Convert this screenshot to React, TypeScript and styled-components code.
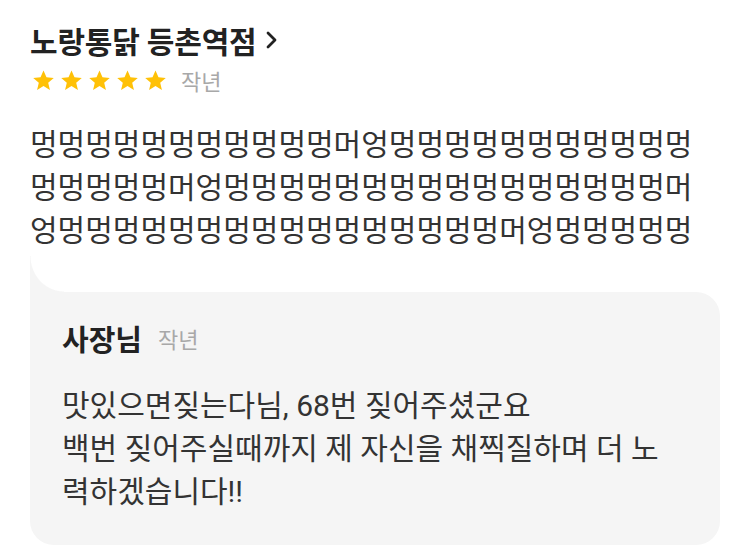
import React from 'react';
import styled, { createGlobalStyle } from 'styled-components';

const GlobalStyle = createGlobalStyle`
  body {
    margin: 0;
    background: #ffffff;
    font-family: Roboto, 'Noto Sans CJK KR', 'Noto Sans', sans-serif;
  }
`;

const Page = styled.div`
  padding: 18px 30px 0 30px;
`;

const TitleRow = styled.div`
  display: flex;
  align-items: center;
  gap: 10px;
  height: 44px;
`;

const ShopName = styled.h1`
  margin: 0;
  font-size: 30px;
  font-weight: 700;
  color: #222222;
  letter-spacing: -0.2px;
`;

const MetaRow = styled.div`
  display: flex;
  align-items: center;
  height: 36px;
`;

const Stars = styled.div`
  display: flex;
  gap: 5px;
  margin-left: 2px;
`;

const TimeAgo = styled.span<{ $gap?: number }>`
  font-size: 22px;
  color: #a8a8a8;
  margin-left: ${(p) => p.$gap ?? 14}px;
`;

const ReviewText = styled.p`
  margin: 25px 0 0 0;
  font-size: 30px;
  line-height: 43px;
  color: #333333;
  width: 690px;
`;

const Bubble = styled.div`
  position: relative;
  margin-top: 40px;
  width: 690px;
  box-sizing: border-box;
  background: #f5f5f5;
  border-radius: 0 24px 24px 24px;
  padding: 22px 32px 32px 32px;

  &::before {
    content: '';
    position: absolute;
    left: 0;
    top: -36px;
    width: 34px;
    height: 36px;
    background: radial-gradient(
      ellipse 34px 36px at 100% 0,
      transparent 97%,
      #f5f5f5 100%
    );
  }
`;

const OwnerRow = styled.div`
  display: flex;
  align-items: center;
  height: 48px;
`;

const OwnerName = styled.span`
  font-size: 29px;
  font-weight: 700;
  color: #222222;
`;

const ReplyText = styled.p`
  margin: 22px 0 0 0;
  font-size: 30px;
  line-height: 43px;
  color: #333333;
`;

const Star = () => (
  <svg width="23" height="23" viewBox="0 0 24 24">
    <path
      d="M12 1.5l3.1 7.1 7.6.7-5.8 5 1.8 7.5L12 17.8l-6.7 4 1.8-7.5-5.8-5 7.6-.7z"
      fill="#FFC107"
    />
  </svg>
);

const Chevron = () => (
  <svg width="12" height="20" viewBox="0 0 12 20">
    <polyline
      points="2,3 9,10 2,17"
      fill="none"
      stroke="#222222"
      strokeWidth="2.8"
      strokeLinecap="round"
      strokeLinejoin="round"
    />
  </svg>
);

const reviewLines = [
  '멍멍멍멍멍멍멍멍멍멍멍머엉멍멍멍멍멍멍멍멍멍멍멍',
  '멍멍멍멍멍머엉멍멍멍멍멍멍멍멍멍멍멍멍멍멍멍멍머',
  '엉멍멍멍멍멍멍멍멍멍멍멍멍멍멍멍멍머엉멍멍멍멍멍',
];

const App = () => {
  return (
    <Page>
      <GlobalStyle />
      <TitleRow>
        <ShopName>노랑통닭 등촌역점</ShopName>
        <Chevron />
      </TitleRow>
      <MetaRow>
        <Stars>
          {new Array(5).fill(undefined).map((_: any, index: number) => (
            <Star key={index.toString()} />
          ))}
        </Stars>
        <TimeAgo>작년</TimeAgo>
      </MetaRow>
      <ReviewText>
        {reviewLines.map((line, i) => (
          <React.Fragment key={i}>
            {line}
            {i < reviewLines.length - 1 && <br />}
          </React.Fragment>
        ))}
      </ReviewText>
      <Bubble>
        <OwnerRow>
          <OwnerName>사장님</OwnerName>
          <TimeAgo $gap={16}>작년</TimeAgo>
        </OwnerRow>
        <ReplyText>
          맛있으면짖는다님, 68번 짖어주셨군요
          <br />
          백번 짖어주실때까지 제 자신을 채찍질하며 더 노
          <br />
          력하겠습니다!!
        </ReplyText>
      </Bubble>
    </Page>
  );
};

export default App;
